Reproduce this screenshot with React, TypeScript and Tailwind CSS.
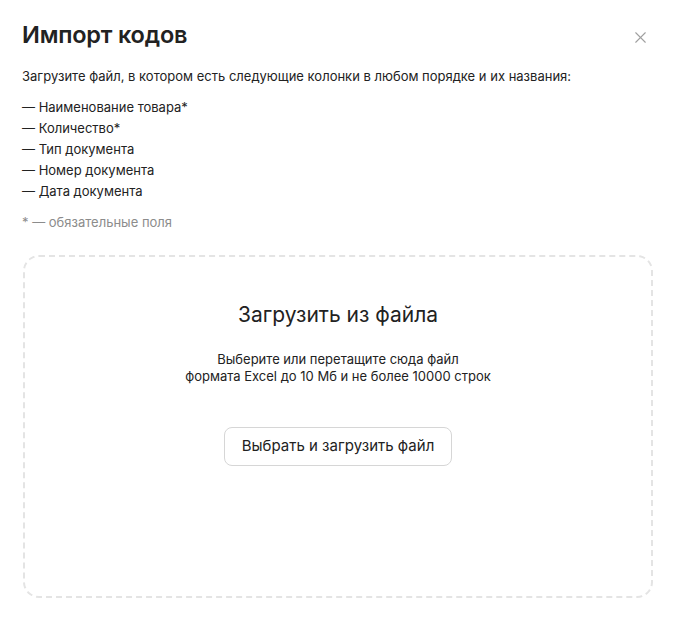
import { X } from "lucide-react";

const columns = [
  "Наименование товара*",
  "Количество*",
  "Тип документа",
  "Номер документа",
  "Дата документа",
];

export default function App() {
  return (
    <div
      className="w-[676px] h-[633px] bg-white px-[22px] pt-[20px] text-[#222]"
      style={{ fontFamily: "Inter, 'Noto Sans', sans-serif" }}
    >
      <div className="flex items-start justify-between">
        <h1 className="text-[23.5px] leading-[30px] font-semibold text-[#222] tracking-[-0.2px]">
          Импорт кодов
        </h1>
        <button className="mt-[8px] mr-[4px] text-[#a0a0a0]">
          <X size={19} strokeWidth={1.4} />
        </button>
      </div>

      <p className="mt-[16px] text-[13px] leading-[20px]">
        Загрузите файл, в котором есть следующие колонки в любом порядке и их названия:
      </p>

      <ul className="mt-[11px] text-[13px] leading-[21px]">
        {columns.map((c) => (
          <li key={c}>— {c}</li>
        ))}
      </ul>

      <p className="mt-[10px] text-[13px] leading-[20px] text-[#8c8c8c]">* — обязательные поля</p>

      <div className="mt-[23px] mx-[1px] h-[343px] rounded-[16px] border-2 border-dashed border-[#e4e4e4] flex flex-col items-center pt-[43px]">
        <h2 className="text-[21px] leading-[30px] text-[#222]">Загрузить из файла</h2>
        <p className="mt-[21px] text-[13px] leading-[17px] text-center">
          Выберите или перетащите сюда файл
          <br />
          формата Excel до 10 Мб и не более 10000 строк
        </p>
        <button className="mt-[42px] h-[39px] px-[17px] rounded-[8px] border border-[#d6d6d6] text-[15px] text-[#222]">
          Выбрать и загрузить файл
        </button>
      </div>
    </div>
  );
}
